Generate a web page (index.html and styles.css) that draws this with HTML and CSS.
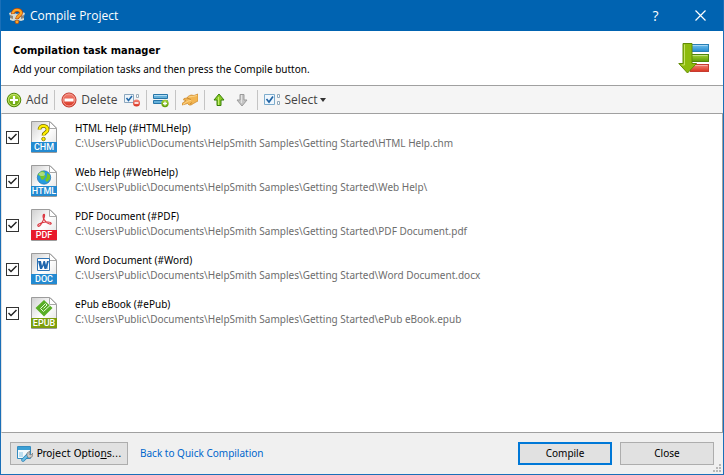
FILE: index.html
```html
<!DOCTYPE html>
<html lang="en">
<head>
<meta charset="utf-8">
<title>Compile Project</title>
<link rel="stylesheet" href="styles.css">
</head>
<body>
<svg class="defs" width="0" height="0" aria-hidden="true">
  <defs>
    <linearGradient id="paper" x1="0" y1="0" x2="1" y2="1"><stop offset="0" stop-color="#cfcfcf"/><stop offset=".5" stop-color="#fff"/><stop offset="1" stop-color="#dedede"/></linearGradient>
    <linearGradient id="green" x1="0" y1="0" x2="0" y2="1"><stop offset="0" stop-color="#a5d334"/><stop offset="1" stop-color="#5c9c06"/></linearGradient>
    <linearGradient id="red" x1="0" y1="0" x2="0" y2="1"><stop offset="0" stop-color="#f4887a"/><stop offset="1" stop-color="#d8321f"/></linearGradient>
    <linearGradient id="blue" x1="0" y1="0" x2="0" y2="1"><stop offset="0" stop-color="#72c1ee"/><stop offset="1" stop-color="#248bd0"/></linearGradient>
    <symbol id="sheet" viewBox="0 0 26 32">
      <path d="M.5 .5H19L25.500 7V31.500H.5Z" fill="url(#paper)" stroke="#9c9c9c"/>
      <path d="M18.500 .5V7.500H25.500Z" fill="#fff" stroke="#a8a8a8"/>
    </symbol>
  </defs>
</svg>
<div class="window">
  <header class="titlebar">
    <svg class="app-icon" width="16" height="16" viewBox="0 0 16 16" aria-hidden="true">
      <path d="M0 5l3-1 5 2 5-2 3 1-1 3v4l-3 1-4-1-4 1-3-1V8Z" fill="#d3dad4"/>
      <path d="M1 7l3 1v3l-3-1ZM15 7l-3 1v3l3-1Z" fill="#8e8678"/>
      <path d="M4 6C3.500 .8 12.500 .8 12 5C12 7.500 8 7.500 8 11" fill="none" stroke="#b8470a" stroke-width="3.800"/>
      <path d="M4 5.500C3.500 .8 12.500 .8 12 5C12 7.500 8 7.500 8 10.500" fill="none" stroke="#fda523" stroke-width="2.400"/>
      <circle cx="8" cy="13.800" r="1.900" fill="#fda523" stroke="#b8470a" stroke-width=".7"/>
    </svg>
    <h1>Compile Project</h1>
    <button class="caption-button" type="button" aria-label="Help">?</button>
    <button class="caption-button" type="button" aria-label="Close window"><svg width="11" height="11" viewBox="0 0 11 11"><path d="M.5 .5l10 10M10.500 .5l-10 10" stroke="#fff" stroke-width="1.200"/></svg></button>
  </header>

  <section class="intro">
    <div class="intro-text">
      <h2>Compilation task manager</h2>
      <p>Add your compilation tasks and then press the Compile button.</p>
    </div>
    <svg width="32" height="32" viewBox="0 0 32 32" aria-hidden="true">
      <rect x="12.500" y="2.500" width="18" height="7" fill="url(#blue)" stroke="#287fb5"/>
      <rect x="12.500" y="12.500" width="18" height="7" fill="url(#green)" stroke="#4f850b"/>
      <rect x="12.500" y="22.500" width="18" height="7" fill="url(#red)" stroke="#c73b30"/>
      <path d="M13.500 3.500h16M13.500 13.500h16M13.500 23.500h16" stroke="#fff" stroke-opacity=".4"/>
      <path d="M5 1.500h9v20h4.500L9.500 31L.8 21.500H5Z" fill="#8dbb0c" stroke="#628c05"/>
      <path d="M6.500 2.500V23H3.500" fill="none" stroke="#c6e264"/>
    </svg>
  </section>

  <nav class="toolbar" aria-label="Tasks">
    <button type="button"><svg width="16" height="16" viewBox="0 0 16 16"><circle cx="8" cy="8" r="6.800" fill="url(#green)" stroke="#508807"/><circle cx="8" cy="8" r="5.700" fill="none" stroke="#c1df6d"/><path d="M8 4v8M4 8h8" stroke="#fff" stroke-width="2.200"/></svg>Add</button>
    <span class="separator"></span>
    <button type="button"><svg width="16" height="16" viewBox="0 0 16 16"><circle cx="8" cy="8" r="7" fill="url(#red)" stroke="#bd2e23"/><circle cx="8" cy="8" r="6" fill="none" stroke="#f5a095"/><path d="M3.500 8h9" stroke="#fff" stroke-width="3"/></svg>Delete</button>
    <button type="button" aria-label="Delete selected"><svg width="16" height="16" viewBox="0 0 16 16"><path d="M.5 2.500h9v8h-9Z" fill="#edf5fb" stroke="#8ca7be"/><path d="M2.500 6l2 2.500L8 4" fill="none" stroke="#2369a9" stroke-width="1.600"/><path d="M12.500 2.500h2v3h-2Z" fill="#fff" stroke="#9dacb8"/><circle cx="12.500" cy="11" r="3.500" fill="url(#red)"/><path d="M10.500 11h4" stroke="#fff" stroke-width="1.600"/></svg></button>
    <span class="separator"></span>
    <button type="button" aria-label="Add section"><svg width="16" height="16" viewBox="0 0 16 16"><path d="M.5 2.500h14v4H.5ZM.5 8.500h14v3H.5Z" fill="#64b0da" stroke="#2876a8"/><path d="M1 3.500h13" stroke="#b2def5"/><circle cx="12" cy="11.500" r="3.700" fill="url(#green)"/><path d="M12 9.500v4M10 11.500h4" stroke="#fff" stroke-width="1.300"/></svg></button>
    <span class="separator"></span>
    <button type="button" aria-label="Edit task"><svg width="16" height="16" viewBox="0 0 16 16"><path d="M6 4.500L9 3l3 .5L16 2v7l-2 1-2.500 1.500L9 13H7l-1.500-1.500L0 13v-1.500L4 8.500 1.500 8 2 6.500 5 6Z" fill="#f2b552" stroke="#c88426" stroke-width=".7"/><path d="M6.500 5l4-.5 4.500-1M1 12.500l5-3.500 3-.5" fill="none" stroke="#ffdd96" stroke-width=".8"/><path d="M5 6l4 1.500M8 12l2-1.500" stroke="#b87822" stroke-width=".7"/></svg></button>
    <span class="separator"></span>
    <button type="button" aria-label="Move up"><svg width="17" height="16" viewBox="0 0 17 16"><path d="M8 2l5 6H10v5.500H6V8H3Z" fill="#8bcb26" stroke="#39800b"/><path d="M7.500 5v8" stroke="#c5ec72"/></svg></button>
    <button type="button" aria-label="Move down"><svg width="17" height="16" viewBox="0 0 17 16"><path d="M6 2.500h4V8h3l-5 6-5-6h3Z" fill="#c5c5c5" stroke="#9b9b9b"/><path d="M7.500 3v8" stroke="#e4e4e4"/></svg></button>
    <span class="separator"></span>
    <button type="button"><svg width="17" height="16" viewBox="0 0 17 16"><path d="M.5 2.500h10v10h-10Z" fill="#eff7fe" stroke="#7daccc"/><path d="M2.500 7l2.500 3L9 4.500" fill="none" stroke="#2265a4" stroke-width="1.700"/><path d="M13.500 2.500h2v3h-2ZM13.500 9.500h2v3h-2Z" fill="#fff" stroke="#91a9ba"/></svg>Select<svg class="caret" width="6" height="4" viewBox="0 0 6 4"><path d="M0 0h6L3 4Z" fill="#333"/></svg></button>
  </nav>

  <main class="task-list">
    <label class="task"><input type="checkbox" checked>
      <svg width="26" height="32" viewBox="0 0 26 32" aria-hidden="true"><use href="#sheet"/><path d="M8.500 8.500C8.500 3.500 17 3.500 16.500 9C16.500 12 12.500 11 12.500 14.500" fill="none" stroke="#797000" stroke-width="3.800"/><path d="M8.500 8.500C8.500 3.500 17 3.500 16.500 9C16.500 12 12.500 11 12.500 14.500" fill="none" stroke="#ffee00" stroke-width="2.300"/><circle cx="12.500" cy="18" r="1.800" fill="#fe0" stroke="#797000" stroke-width=".8"/><path d="M0 21h26v10H0Z" fill="#238ad1"/><text class="badge" x="13" y="29">CHM</text></svg>
      <span class="task-text"><span class="name">HTML Help (#HTMLHelp)</span><span class="path">C:\Users\Public\Documents\HelpSmith Samples\Getting Started\HTML Help.chm</span></span></label>
    <label class="task"><input type="checkbox" checked>
      <svg width="26" height="32" viewBox="0 0 26 32" aria-hidden="true"><use href="#sheet"/><circle cx="13" cy="12.500" r="6.700" fill="#279cdf" stroke="#2571ad" stroke-width=".7"/><path d="M7 9l4-3 3 1-1 3 2 1-3 4-2-1-1-3-2-1ZM16 8l3 2v4l-3 3-2-2 2-3Z" fill="#76c626"/><ellipse cx="11" cy="9" rx="3" ry="2" fill="#fff" opacity=".4"/><path d="M0 21h26v10H0Z" fill="#238ad1"/><text class="badge" x="13" y="29">HTML</text></svg>
      <span class="task-text"><span class="name">Web Help (#WebHelp)</span><span class="path">C:\Users\Public\Documents\HelpSmith Samples\Getting Started\Web Help\</span></span></label>
    <label class="task"><input type="checkbox" checked>
      <svg width="26" height="32" viewBox="0 0 26 32" aria-hidden="true"><use href="#sheet"/><path d="M7 17C5.500 15 12 13 17 13C21 13 21 15.500 18.500 15C14 14 11 8 12.500 5.500C14.500 4 13.500 10 10.500 14.500C9 17 7.500 18 7 17Z" fill="none" stroke="#dc3842" stroke-width="1.200"/><path d="M0 21h26v10H0Z" fill="#e8192b"/><text class="badge" x="13" y="29">PDF</text></svg>
      <span class="task-text"><span class="name">PDF Document (#PDF)</span><span class="path">C:\Users\Public\Documents\HelpSmith Samples\Getting Started\PDF Document.pdf</span></span></label>
    <label class="task"><input type="checkbox" checked>
      <svg width="26" height="32" viewBox="0 0 26 32" aria-hidden="true"><use href="#sheet"/><path d="M6.500 5.500h12v12h-12Z" fill="#fff" stroke="#2f74b5"/><path d="M16.500 8v8" stroke="#9fc2e0"/><path d="M7 8h3l1 5 1.500-5h1.500l1 4 1-4h2l-2.500 8h-2L12.500 12.500 11 16H9Z" fill="#1f66ad"/><path d="M0 21h26v10H0Z" fill="#238ad1"/><text class="badge" x="13" y="29">DOC</text></svg>
      <span class="task-text"><span class="name">Word Document (#Word)</span><span class="path">C:\Users\Public\Documents\HelpSmith Samples\Getting Started\Word Document.docx</span></span></label>
    <label class="task"><input type="checkbox" checked>
      <svg width="26" height="32" viewBox="0 0 26 32" aria-hidden="true"><use href="#sheet"/><path d="M13 3l8.500 8L13 19.500L4.500 11Z" fill="#58ae25"/><path d="M19 8.500L12.500 14.500L9.500 11.500L14.500 6.500L16 8L12.500 11.500" fill="none" stroke="#e5f5d9"/><path d="M0 21h26v10H0Z" fill="#7c9d0b"/><text class="badge" x="13" y="29">EPUB</text></svg>
      <span class="task-text"><span class="name">ePub eBook (#ePub)</span><span class="path">C:\Users\Public\Documents\HelpSmith Samples\Getting Started\ePub eBook.epub</span></span></label>
  </main>

  <footer class="footer">
    <button class="push options" type="button"><svg width="16" height="16" viewBox="0 0 16 16"><path d="M.5 .5h13v12H.5Z" fill="#f5fafd" stroke="#348cc0"/><path d="M1 1h12v3H1Z" fill="#3b9fd4"/><path d="M2 6h4v5H2Z" fill="#bedff0"/><path d="M6 14l5-5" stroke="#2c83b6" stroke-width="3.500" stroke-linecap="round"/><path d="M6 14l4-4" stroke="#6dbfe6" stroke-width="2" stroke-linecap="round"/><path d="M10 7l3-2-1 3 2 1 2-2-1 4-3 1-2-2Z" fill="#ccc" stroke="#777" stroke-width=".7"/></svg><span>Project Optio<u>n</u>s...</span></button>
    <a href="#">Back to Quick Compilation</a>
    <button class="push primary" type="button">Compile</button>
    <button class="push" type="button">Close</button>
    <svg class="grip" width="8" height="8" viewBox="0 0 8 8" aria-hidden="true"><path d="M6 0h2v2H6ZM3 3h2v2H3ZM6 3h2v2H6ZM0 6h2v2H0ZM3 6h2v2H3ZM6 6h2v2H6Z" fill="#b8b8b8"/></svg>
  </footer>
</div>
</body>
</html>
```
FILE: styles.css
```css
* { box-sizing: border-box; }

body {
  margin: 0;
  color: #000;
  font: 10px/15px "Noto Sans", Tahoma, sans-serif;
}

button { font: inherit; color: inherit; white-space: nowrap; }
h1, h2, p { margin: 0; }
.defs { position: absolute; }
svg { display: block; flex: none; }

.window {
  display: flex;
  flex-direction: column;
  min-height: 100vh;
  border: 1px solid #1a6fb8;
  border-top: 0;
  background: #f0f0f0;
}

.titlebar {
  display: flex;
  align-items: center;
  height: 31px;
  padding-left: 8px;
  background: #0063b1;
  color: #fff;
}
.titlebar h1 {
  flex: 1;
  margin-left: 5px;
  font: 12px/16px "Open Sans", "Segoe UI", sans-serif;
}
.caption-button {
  display: flex;
  align-items: center;
  justify-content: center;
  width: 45px;
  height: 30px;
  padding: 0;
  border: 0;
  background: none;
  font: 14px/16px "Open Sans", "Segoe UI", sans-serif;
}

.intro {
  display: flex;
  align-items: center;
  justify-content: space-between;
  height: 55px;
  padding: 0 13px 0 12px;
  border-bottom: 1px solid #a0a0a0;
  background: #fff;
}
.intro-text {
  display: flex;
  flex-direction: column;
  gap: 4px;
  padding-top: 4px;
}
.intro h2 { font: bold 11px/15px "DejaVu Sans Condensed", Tahoma, sans-serif; }

.toolbar {
  display: flex;
  align-items: center;
  gap: 6px;
  height: 27px;
  padding-left: 5px;
  background: #f5f5f5;
  color: #444;
  font: 12px/16px "Open Sans", "Segoe UI", sans-serif;
}
.toolbar button {
  display: flex;
  align-items: center;
  gap: 4px;
  padding: 0;
  border: 0;
  background: none;
}
.toolbar .caret { margin-left: -2px; }
.separator {
  width: 1px;
  height: 20px;
  background: #c4c4c4;
}

.task-list {
  flex: 1;
  padding: 1px 4px;
  border: 1px solid #a0a0a0;
  border-left-color: #e3e3e3;
  background: #fff;
}
.task {
  display: flex;
  align-items: center;
  height: 44px;
}
.task input {
  appearance: none;
  width: 13px;
  height: 13px;
  margin: 0 12px 0 0;
  border: 1px solid #333;
  background: #fff;
}
.task input:checked::before {
  content: "";
  display: block;
  width: 11px;
  height: 11px;
  background: #222;
  clip-path: polygon(1px 6px, 2px 5px, 4px 7px, 9px 2px, 10px 3px, 4px 9px);
}
.task-text {
  display: flex;
  flex-direction: column;
  margin-left: 18px;
  padding-bottom: 3px;
}
.path { color: #6d6d6d; }
.badge {
  fill: #fff;
  font: 500 9px Roboto, Arial, sans-serif;
  text-anchor: middle;
}

.footer {
  position: relative;
  display: flex;
  align-items: center;
  gap: 8px;
  height: 41px;
  padding: 0 9px;
}
.push {
  display: flex;
  align-items: center;
  justify-content: center;
  gap: 4px;
  width: 94px;
  height: 23px;
  padding: 0;
  border: 1px solid #adadad;
  background: #e1e1e1;
}
.options { width: 118px; }
.options span { font: 11px/15px "DejaVu Sans Condensed", Tahoma, sans-serif; }
.primary { border: 2px solid #0078d7; }
.footer a {
  margin: 0 auto 0 4px;
  color: #0066cc;
  text-decoration: none;
}
.grip {
  position: absolute;
  right: 2px;
  bottom: 2px;
}
```
